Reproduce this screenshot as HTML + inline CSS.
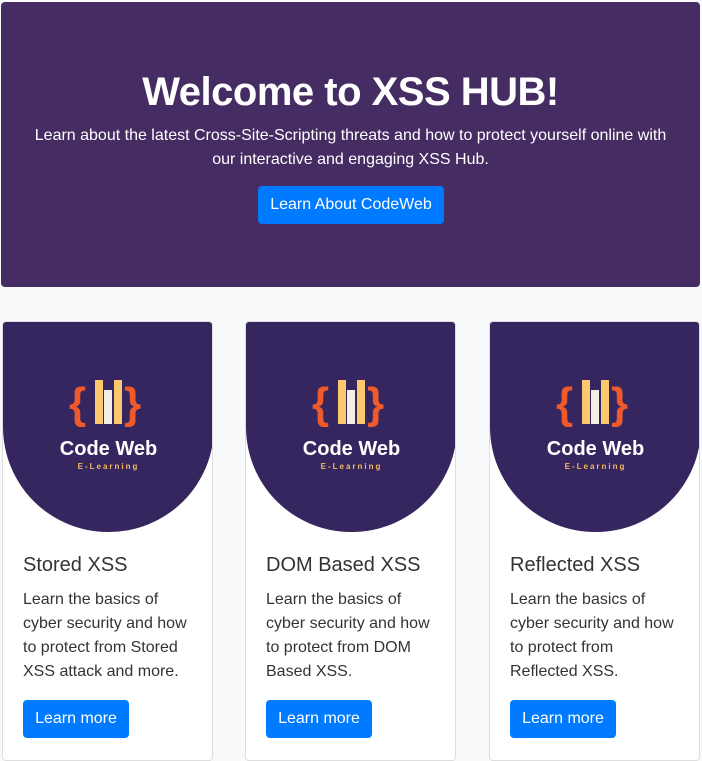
<!DOCTYPE html>
<html><head><style>
body{margin:0;background:#f8f9fa;font-family:"Liberation Sans",sans-serif;width:702px;height:757px;overflow:hidden;position:relative}
.hero{position:absolute;left:1px;top:2px;width:699px;height:285px;background:#452c63;border-radius:4px;color:#fff;text-align:center}
.hero h1{margin:0;position:absolute;top:68px;width:100%;font-size:40px;font-weight:bold;letter-spacing:-0.5px}
.hero p{position:absolute;top:122px;width:100%;margin:0;font-size:16px;line-height:24px}
.btn{display:inline-block;background:#007bff;color:#fff;border-radius:4px;font-size:16px;text-align:center}
.hero .btn{position:absolute;left:257px;top:184px;width:186px;height:38px;line-height:38px}
.card{position:absolute;top:321px;width:211px;height:440px;background:#fff;border:1px solid #ddd;border-radius:4px;box-sizing:border-box;overflow:hidden}
.shield{position:absolute;left:0;top:0;width:211px;height:210px;background:#36265f;border-radius:0 0 105px 105px}
.logo{position:absolute;left:0;top:56px;width:211px;text-align:center}
.cw{position:absolute;top:116px;width:211px;text-align:center;color:#fff;font-weight:bold;font-size:20px}
.el{position:absolute;top:140px;width:211px;text-align:center;color:#f4b860;font-weight:bold;font-size:8px;letter-spacing:2px}
.card h5{position:absolute;left:20px;top:232px;margin:0;font-size:20px;font-weight:normal;color:#333}
.card p{position:absolute;left:20px;top:266px;margin:0;width:175px;font-size:16px;line-height:24px;color:#333}
.card .btn{position:absolute;left:20px;top:378px;width:106px;height:38px;line-height:38px}
</style></head><body>
<div class="hero"><h1>Welcome to XSS HUB!</h1>
<p>Learn about the latest Cross-Site-Scripting threats and how to protect yourself online with<br>our interactive and engaging XSS Hub.</p>
<span class="btn">Learn About CodeWeb</span></div>

<div class="card" style="left:2px"><div class="shield"></div>
<svg class="logo" width="211" height="50" viewBox="0 0 211 50"><text x="66" y="40" font-size="44" fill="#ee5a2c" font-family="Liberation Sans" font-weight="bold">{</text><rect x="92" y="2" width="8" height="44" fill="#fbc86d"/><rect x="101" y="12" width="8" height="34" fill="#f4efe6"/><rect x="111" y="2" width="8" height="44" fill="#fbc86d"/><text x="121" y="40" font-size="44" fill="#ee5a2c" font-family="Liberation Sans" font-weight="bold">}</text></svg>
<div class="cw">Code Web</div><div class="el">E-Learning</div>
<h5>Stored XSS</h5><p>Learn the basics of cyber security and how to protect from Stored XSS attack and more.</p><span class="btn">Learn more</span></div>

<div class="card" style="left:245px"><div class="shield"></div>
<svg class="logo" width="211" height="50" viewBox="0 0 211 50"><text x="66" y="40" font-size="44" fill="#ee5a2c" font-family="Liberation Sans" font-weight="bold">{</text><rect x="92" y="2" width="8" height="44" fill="#fbc86d"/><rect x="101" y="12" width="8" height="34" fill="#f4efe6"/><rect x="111" y="2" width="8" height="44" fill="#fbc86d"/><text x="121" y="40" font-size="44" fill="#ee5a2c" font-family="Liberation Sans" font-weight="bold">}</text></svg>
<div class="cw">Code Web</div><div class="el">E-Learning</div>
<h5>DOM Based XSS</h5><p>Learn the basics of cyber security and how to protect from DOM Based XSS.</p><span class="btn">Learn more</span></div>

<div class="card" style="left:489px"><div class="shield"></div>
<svg class="logo" width="211" height="50" viewBox="0 0 211 50"><text x="66" y="40" font-size="44" fill="#ee5a2c" font-family="Liberation Sans" font-weight="bold">{</text><rect x="92" y="2" width="8" height="44" fill="#fbc86d"/><rect x="101" y="12" width="8" height="34" fill="#f4efe6"/><rect x="111" y="2" width="8" height="44" fill="#fbc86d"/><text x="121" y="40" font-size="44" fill="#ee5a2c" font-family="Liberation Sans" font-weight="bold">}</text></svg>
<div class="cw">Code Web</div><div class="el">E-Learning</div>
<h5>Reflected XSS</h5><p>Learn the basics of cyber security and how to protect from Reflected XSS.</p><span class="btn">Learn more</span></div>
</body></html>
